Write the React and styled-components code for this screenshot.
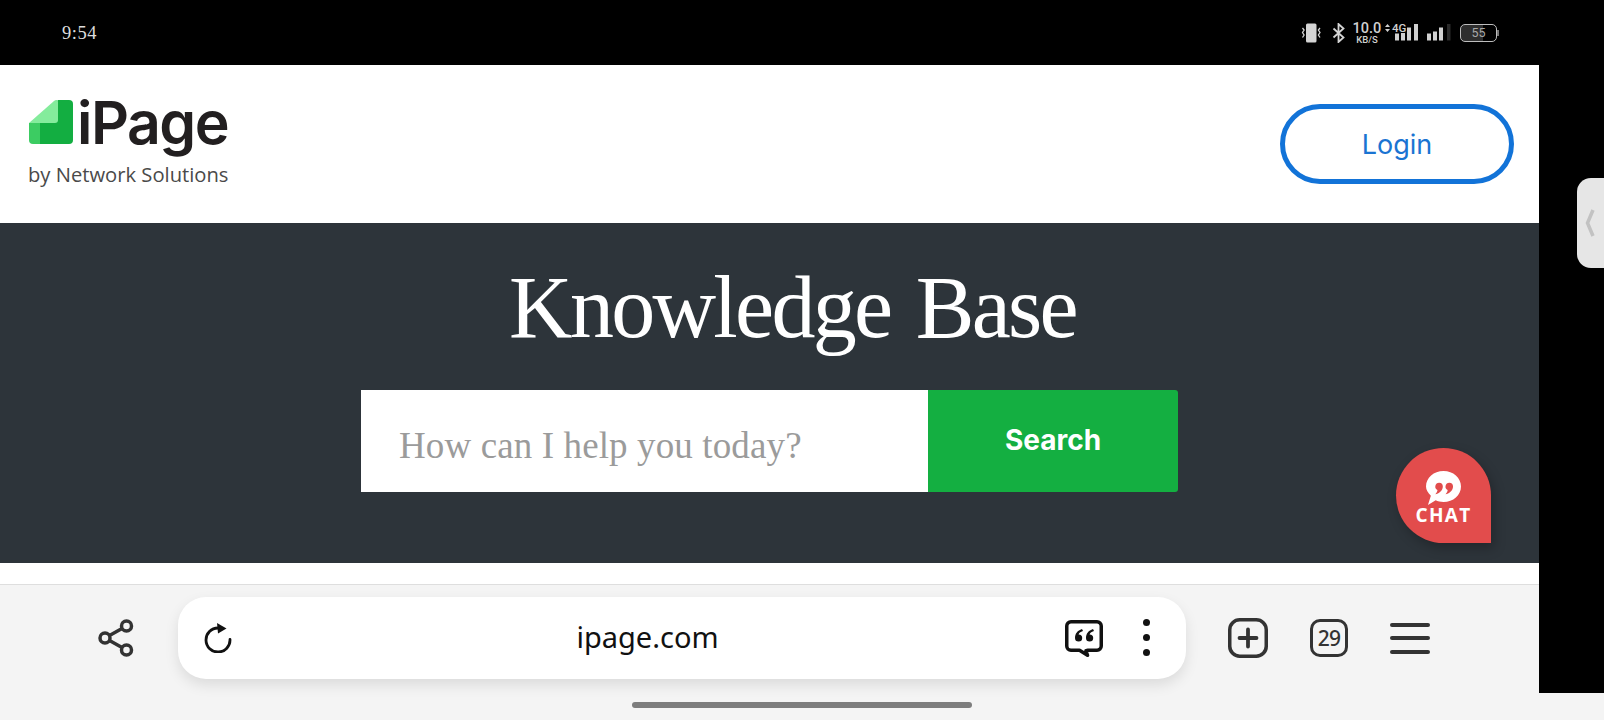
import React from 'react';
import styled, { createGlobalStyle } from 'styled-components';

const GlobalStyle = createGlobalStyle`
  html, body {
    margin: 0;
    padding: 0;
    background: #000;
  }
  * {
    box-sizing: border-box;
  }
`;

const Device = styled.div`
  position: relative;
  width: 1604px;
  height: 720px;
  overflow: hidden;
  background: #000;
  display: flex;
  flex-direction: column;
`;

const StatusBar = styled.div`
  height: 65px;
  flex: none;
  display: flex;
  align-items: center;
  justify-content: space-between;
  padding: 0 105px 0 62px;
  color: #d8d8d8;
`;

const Clock = styled.span`
  font: 18.500px 'Liberation Serif', serif;
  letter-spacing: 0.500px;
  color: #dcdcdc;
  margin-top: 2px;
`;

const StatusIcons = styled.div`
  display: flex;
  align-items: center;
`;

const Speed = styled.div`
  display: flex;
  flex-direction: column;
  align-items: center;
  width: 32px;
  margin: 0 2px 0 5px;
  font-family: 'Roboto', sans-serif;
  font-weight: 500;
  color: #d0d0d0;
`;

const SpeedValue = styled.span`
  font-size: 14.500px;
  line-height: 17px;
  white-space: nowrap;
`;

const SpeedUnit = styled.span`
  font-size: 9.500px;
  line-height: 11px;
  margin-top: -3px;
  white-space: nowrap;
`;

const Battery = styled.div`
  width: 37px;
  height: 18px;
  margin-left: 9px;
  border: 1.500px solid #bdbdbd;
  border-radius: 5px;
  display: flex;
  align-items: center;
  justify-content: center;
  font: 12.500px 'Roboto', sans-serif;
  color: #a8a8a8;
  background: linear-gradient(90deg, #2e2e2e 62%, #000 62%);
`;

const BatteryNub = styled.div`
  width: 2px;
  height: 6px;
  background: #777;
`;

const MainRow = styled.div`
  height: 628px;
  flex: none;
  display: flex;
`;

const Screen = styled.div`
  width: 1539px;
  flex: none;
  display: flex;
  flex-direction: column;
  background: #fff;
`;

const Gutter = styled.div`
  flex: 1;
  display: flex;
  justify-content: flex-end;
  align-items: flex-start;
  padding-top: 113px;
`;

const SideHandle = styled.div`
  width: 27px;
  height: 90px;
  background: #e6e6e6;
  border-radius: 14px 0 0 14px;
  display: flex;
  align-items: center;
  padding-left: 8px;
`;

const Header = styled.header`
  height: 158px;
  flex: none;
  display: flex;
  align-items: flex-start;
  justify-content: space-between;
  padding: 35px 25px 0 29px;
`;

const Logo = styled.div`
  display: flex;
  flex-direction: column;
`;

const LogoRow = styled.div`
  display: flex;
  align-items: flex-start;
  height: 60px;
  gap: 4px;
`;

const LogoWord = styled.span`
  font-family: 'Inter', sans-serif;
  font-size: 59px;
  font-weight: 600;
  line-height: 62px;
  letter-spacing: -1.500px;
  color: #221f20;
  margin-top: -8px;
`;

const LogoTag = styled.span`
  font-family: 'Open Sans', sans-serif;
  font-size: 20.200px;
  line-height: 28px;
  color: #4a4a4a;
  margin-left: -1px;
  white-space: nowrap;
`;

const LoginButton = styled.button`
  width: 234px;
  height: 80px;
  margin-top: 4px;
  background: #fff;
  border: 5px solid #1273d8;
  border-radius: 40px;
  color: #1a74d2;
  font-family: 'Inter', sans-serif;
  font-size: 27px;
  font-weight: 400;
`;

const Hero = styled.section`
  position: relative;
  height: 340px;
  flex: none;
  background: #2d343a;
  display: flex;
  flex-direction: column;
  align-items: center;
`;

const Title = styled.h1`
  margin: 40px 0 0 46px;
  height: 127px;
  font-family: 'Liberation Serif', serif;
  font-size: 88px;
  font-weight: 400;
  line-height: 90px;
  color: #fff;
  white-space: nowrap;
  letter-spacing: -2.700px;
  word-spacing: 6px;
`;

const SearchForm = styled.form`
  display: flex;
  width: 817px;
  height: 102px;
`;

const SearchInput = styled.input`
  width: 567px;
  height: 102px;
  border: 0;
  outline: 0;
  background: #fff;
  padding: 8px 0 0 38px;
  font-family: 'Liberation Serif', serif;
  font-size: 37px;
  letter-spacing: 0.120px;
  color: #333;

  &::placeholder {
    color: #9b9b9b;
    opacity: 1;
  }
`;

const SearchButton = styled.button`
  width: 250px;
  height: 102px;
  border: 0;
  border-radius: 0 3px 3px 0;
  background: #14af41;
  color: #fff;
  font-family: 'Inter', sans-serif;
  font-size: 28px;
  font-weight: 700;
  padding: 0 0 2px;
`;

const ChatBubble = styled.div`
  position: absolute;
  left: 1396px;
  top: 225px;
  width: 95px;
  height: 95px;
  border-radius: 50% 50% 0 50%;
  background: #e24c4c;
  box-shadow: 3px 5px 12px rgba(0, 0, 0, 0.25);
  display: flex;
  flex-direction: column;
  align-items: center;
  padding-top: 23px;
  color: #fff;
`;

const ChatLabel = styled.span`
  font-family: 'Open Sans', sans-serif;
  font-size: 19px;
  font-weight: 700;
  line-height: 19px;
  letter-spacing: 1.300px;
  margin-top: 1px;
`;

const WhiteGap = styled.div`
  height: 22px;
  flex: none;
  background: #fff;
  border-bottom: 1px solid #dedede;
`;

const Toolbar = styled.div`
  flex: 1;
  background: #f4f4f4;
  display: flex;
  align-items: flex-start;
  padding: 12px 0 0 98px;
`;

const ShareSlot = styled.div`
  width: 80px;
  padding-top: 22px;
  display: flex;
`;

const AddressBar = styled.div`
  width: 1008px;
  height: 82px;
  background: #fff;
  border-radius: 28px;
  box-shadow: 0 6px 14px rgba(0, 0, 0, 0.1);
  display: flex;
  align-items: center;
  position: relative;
  padding: 0 36px 0 26px;
`;

const Url = styled.span`
  flex: 1;
  text-align: center;
  font-family: 'Noto Sans', sans-serif;
  font-size: 29px;
  color: #111;
  padding-right: 2px;
  margin-top: -4px;
`;

const Dots = styled.div`
  display: flex;
  flex-direction: column;
  gap: 8px;
  margin-left: 40px;
  margin-top: -2px;
`;

const Dot = styled.span`
  width: 7px;
  height: 7px;
  border-radius: 50%;
  background: #111;
`;

const ToolIcons = styled.div`
  display: flex;
  align-items: center;
  height: 40px;
  margin: 21px 0 0 42px;
`;

const TabCount = styled.div`
  width: 38px;
  height: 38px;
  margin-left: 42px;
  border: 3.500px solid #333;
  border-radius: 10px;
  display: flex;
  align-items: center;
  justify-content: center;
  font-family: 'Noto Sans', sans-serif;
  font-size: 21px;
  font-weight: 500;
  letter-spacing: -0.800px;
  color: #333;
`;

const Burger = styled.div`
  width: 40px;
  margin-left: 42px;
  display: flex;
  flex-direction: column;
  gap: 9.500px;
`;

const BurgerLine = styled.span`
  height: 4px;
  border-radius: 2px;
  background: #333;
`;

const HomeArea = styled.div`
  flex: 1;
  background: #f4f4f4;
  display: flex;
  justify-content: center;
  padding-top: 9px;
`;

const HomeIndicator = styled.div`
  width: 340px;
  height: 6px;
  border-radius: 3px;
  background: #7d7d7d;
`;

const VibrateIcon = () => (
  <svg width="22" height="20" viewBox="0 0 22 20" fill="none">
    <rect x="6" y="0.500" width="10.500" height="19" rx="1.500" fill="#d4d4d4" />
    <path d="M2.500 5l1.600 2-1.600 2.500 1.600 2.500-1.600 2.500M20 5l-1.600 2 1.600 2.500-1.600 2.500 1.600 2.500" stroke="#d4d4d4" strokeWidth="1.300" />
  </svg>
);

const BluetoothIcon = () => (
  <svg width="14" height="20" viewBox="0 0 14 20" fill="none" style={{ marginLeft: 10 }}>
    <path d="M1.500 5.500l10 9-5 4.500V1l5 4.500-10 9" stroke="#d4d4d4" strokeWidth="1.800" />
  </svg>
);

const NetworkIcon = () => (
  <svg width="33" height="20" viewBox="0 0 33 20">
    <path d="M0 4l2.500-3L5 4zM0 6l2.500 3L5 6z" fill="#d0d0d0" />
    <text x="7" y="9" fontFamily="Roboto, sans-serif" fontSize="11.500" fontWeight="500" fill="#d0d0d0">4G</text>
    <rect x="10" y="10.500" width="4" height="7" fill="#d0d0d0" />
    <rect x="16" y="10" width="4" height="7.500" fill="#d0d0d0" />
    <rect x="22" y="4.500" width="4" height="13" fill="#d0d0d0" />
    <rect x="29" y="1" width="4" height="16.500" fill="#d0d0d0" />
  </svg>
);

const SignalIcon = () => (
  <svg width="26" height="20" viewBox="0 0 26 20" style={{ marginLeft: 7 }}>
    <rect x="2" y="10.500" width="4" height="7" fill="#d0d0d0" />
    <rect x="8" y="8.500" width="4" height="9" fill="#d0d0d0" />
    <rect x="14" y="4.500" width="4" height="13" fill="#d0d0d0" />
    <rect x="22" y="1" width="3.500" height="16.500" fill="#2a2a2a" />
  </svg>
);

const LogoMark = () => (
  <svg width="44" height="44" viewBox="0 0 44 44">
    <path d="M29 0h11a4 4 0 0 1 4 4v36a4 4 0 0 1-4 4H11V23z" fill="#13ae41" />
    <path d="M0 23v17a4 4 0 0 0 4 4h7V23z" fill="#3ccc62" />
    <path d="M0 23L25 1c2-1.500 4-1.500 4 1v18a3 3 0 0 1-3 3z" fill="#84ec9c" />
  </svg>
);

const HandleChevron = () => (
  <svg width="10" height="28" viewBox="0 0 10 28" fill="none">
    <path d="M8 1L2.500 14 8 27" stroke="#c2c2c2" strokeWidth="3.500" />
  </svg>
);

const ChatIcon = () => (
  <svg width="37" height="34" viewBox="0 0 38 35">
    <path d="M19 0c10 0 18 7 18 16s-8 16-18 16c-3 0-6-.700-8-1.800L3 35l3-9.500C3 22.500 1 19.500 1 16 1 7 9 0 19 0z" fill="#fff" />
    <path d="M14.500 12a4 4 0 0 0-1.700 7.600c-.200 1.800-1 3.200-2.200 4.400 3.400-.500 7.700-3.500 7.700-8a4 4 0 0 0-3.800-4zM25 12a4 4 0 0 0-1.700 7.600c-.200 1.800-1 3.200-2.200 4.400 3.400-.500 7.700-3.500 7.700-8A4 4 0 0 0 25 12z" fill="#e24c4c" />
  </svg>
);

const ShareIcon = () => (
  <svg width="36" height="38" viewBox="0 0 36 38" fill="none" stroke="#333" strokeWidth="3.500">
    <circle cx="28.500" cy="7" r="5" />
    <circle cx="28.500" cy="31" r="5" />
    <circle cx="7" cy="19" r="5" />
    <path d="M11.500 16.500l12.500-7M11.500 21.500l12.500 7" />
  </svg>
);

const ReloadIcon = () => (
  <svg width="28" height="30" viewBox="0 0 28 30" fill="none">
    <path d="M26 16.500A12 12 0 1 1 14 5" stroke="#111" strokeWidth="2.800" strokeLinecap="round" />
    <path d="M13 0l9.500 5.500L14 10.500z" fill="#111" />
  </svg>
);

const QuoteIcon = () => (
  <svg width="38" height="37" viewBox="0 0 38 37" fill="none">
    <path d="M6 1.750h26a4.250 4.250 0 0 1 4.250 4.250v20a4.250 4.250 0 0 1-4.250 4.250h-9l-2 .500 1.500 4.500-8-5H6A4.250 4.250 0 0 1 1.750 26V6A4.250 4.250 0 0 1 6 1.750z" stroke="#111" strokeWidth="3.500" strokeLinejoin="round" />
    <path d="M17 9c-4.500 1.500-7 4.500-7 9a3.600 3.600 0 1 0 3.600-3.600c.300-1.200 1.700-2.500 4.400-3.400zM28 9c-4.500 1.500-7 4.500-7 9a3.600 3.600 0 1 0 3.600-3.600c.300-1.200 1.700-2.500 4.400-3.400z" fill="#111" />
  </svg>
);

const PlusIcon = () => (
  <svg width="40" height="40" viewBox="0 0 40 40" fill="none" stroke="#333">
    <rect x="1.750" y="1.750" width="36.500" height="36.500" rx="10" strokeWidth="3.500" />
    <path d="M20 11.500v17M11.500 20h17" strokeWidth="3.800" strokeLinecap="round" />
  </svg>
);

const App = () => {
  return (
    <Device>
      <GlobalStyle />
      <StatusBar>
        <Clock>9:54</Clock>
        <StatusIcons>
          <VibrateIcon />
          <BluetoothIcon />
          <Speed>
            <SpeedValue>10.0</SpeedValue>
            <SpeedUnit>KB/S</SpeedUnit>
          </Speed>
          <NetworkIcon />
          <SignalIcon />
          <Battery>55</Battery>
          <BatteryNub />
        </StatusIcons>
      </StatusBar>

      <MainRow>
        <Screen>
          <Header>
            <Logo>
              <LogoRow>
                <LogoMark />
                <LogoWord>iPage</LogoWord>
              </LogoRow>
              <LogoTag>by Network Solutions</LogoTag>
            </Logo>
            <LoginButton type="button">Login</LoginButton>
          </Header>

          <Hero>
            <Title>Knowledge Base</Title>
            <SearchForm onSubmit={(e) => e.preventDefault()}>
              <SearchInput placeholder="How can I help you today?" />
              <SearchButton type="submit">Search</SearchButton>
            </SearchForm>
            <ChatBubble>
              <ChatIcon />
              <ChatLabel>CHAT</ChatLabel>
            </ChatBubble>
          </Hero>

          <WhiteGap />

          <Toolbar>
            <ShareSlot>
              <ShareIcon />
            </ShareSlot>
            <AddressBar>
              <ReloadIcon />
              <Url>ipage.com</Url>
              <QuoteIcon />
              <Dots>
                <Dot />
                <Dot />
                <Dot />
              </Dots>
            </AddressBar>
            <ToolIcons>
              <PlusIcon />
              <TabCount>29</TabCount>
              <Burger>
                <BurgerLine />
                <BurgerLine />
                <BurgerLine />
              </Burger>
            </ToolIcons>
          </Toolbar>
        </Screen>
        <Gutter>
          <SideHandle>
            <HandleChevron />
          </SideHandle>
        </Gutter>
      </MainRow>

      <HomeArea>
        <HomeIndicator />
      </HomeArea>
    </Device>
  );
};

export default App;
